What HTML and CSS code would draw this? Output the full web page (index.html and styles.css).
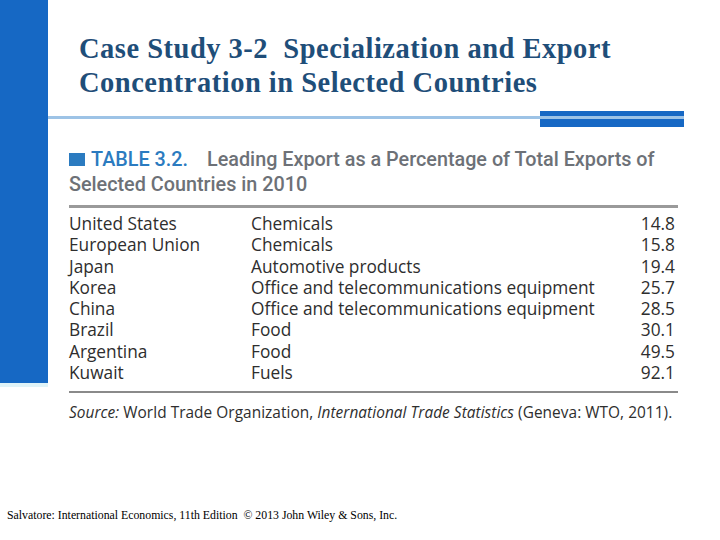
FILE: index.html
```html
<!DOCTYPE html>
<html>
<head>
<meta charset="utf-8">
<link rel="stylesheet" href="styles.css">
</head>
<body>
<div class="slide">
  <div class="sidebar"></div>
  <div class="content">
    <h1 class="title">Case Study 3-2&nbsp; Specialization and Export<br>Concentration in Selected Countries</h1>
    <div class="divider">
      <div class="divider-line"></div>
      <div class="divider-block"><div class="divider-stripe"></div></div>
    </div>
    <div class="table-box">
      <div class="table-head"><span class="square"></span><span class="label">TABLE 3.2.</span><span class="caption">Leading Export as a Percentage of Total Exports of Selected Countries in 2010</span></div>
      <div class="rule"></div>
      <div class="rows">
        <div class="row"><span class="c1">United States</span><span class="c2">Chemicals</span><span class="c3">14.8</span></div>
        <div class="row"><span class="c1">European Union</span><span class="c2">Chemicals</span><span class="c3">15.8</span></div>
        <div class="row"><span class="c1">Japan</span><span class="c2">Automotive products</span><span class="c3">19.4</span></div>
        <div class="row"><span class="c1">Korea</span><span class="c2">Office and telecommunications equipment</span><span class="c3">25.7</span></div>
        <div class="row"><span class="c1">China</span><span class="c2">Office and telecommunications equipment</span><span class="c3">28.5</span></div>
        <div class="row"><span class="c1">Brazil</span><span class="c2">Food</span><span class="c3">30.1</span></div>
        <div class="row"><span class="c1">Argentina</span><span class="c2">Food</span><span class="c3">49.5</span></div>
        <div class="row"><span class="c1">Kuwait</span><span class="c2">Fuels</span><span class="c3">92.1</span></div>
      </div>
      <div class="rule rule-bottom"></div>
      <div class="source"><i>Source:</i> World Trade Organization, <i>International Trade Statistics</i> (Geneva: WTO, 2011).</div>
    </div>
  </div>
</div>
<div class="footer">Salvatore: International Economics, 11th Edition&nbsp; © 2013 John Wiley &amp; Sons, Inc.</div>
</body>
</html>
```

FILE: styles.css
```css
html, body {
  margin: 0;
  padding: 0;
  background: #ffffff;
}
body {
  width: 720px;
  height: 540px;
  overflow: hidden;
  display: flex;
  flex-direction: column;
}
.slide {
  display: grid;
  grid-template-columns: 48px 1fr;
  align-items: start;
}
.sidebar {
  height: 383px;
  background: #1668c4;
  border-bottom: 4px solid #dff3f8;
}
.content {
  display: flex;
  flex-direction: column;
}
.title {
  margin: 32px 0 0 31px;
  font-family: "Liberation Serif", "Times New Roman", serif;
  font-weight: bold;
  font-size: 28.5px;
  line-height: 34px;
  letter-spacing: 0.5px;
  color: #1f4e79;
}
.divider {
  margin-top: 11px;
  margin-right: 36px;
  display: flex;
  align-items: flex-start;
}
.divider-line {
  flex: 1;
  height: 3px;
  margin-top: 5px;
  background: #9dc3e6;
}
.divider-block {
  width: 144px;
  height: 16px;
  background: #1668c4;
  padding-top: 5px;
  box-sizing: border-box;
}
.divider-stripe {
  height: 3px;
  background: #9dc3e6;
}
.table-box {
  margin: 20px 0 0 21px;
  width: 609px;
}
.table-head {
  font-family: Roboto, "Liberation Sans", sans-serif;
  font-weight: 500;
  font-size: 19.8px;
  line-height: 25px;
  color: #6d7177;
}
.square {
  display: inline-block;
  width: 16px;
  height: 13px;
  background: #2b7bc0;
  margin-right: 6px;
}
.label {
  color: #2b7bc0;
  margin-right: 19px;
}
.rule {
  height: 3px;
  background: #9a9a9a;
  margin-top: 8px;
}
.rows {
  margin-top: 5px;
  font-family: "Open Sans", "Liberation Sans", sans-serif;
  font-size: 17.3px;
  color: #2e2e2e;
}
.row {
  display: flex;
  height: 21.3px;
  line-height: 21.3px;
}
.c1 {
  width: 182px;
}
.c2 {
  flex: 1;
}
.c3 {
  padding-right: 3px;
}
.rule-bottom {
  margin-top: 8px;
  height: 2px;
  background: #8a8a8a;
}
.source {
  margin-top: 9px;
  font-family: "Open Sans", "Liberation Sans", sans-serif;
  font-size: 15.4px;
  letter-spacing: 0.05px;
  color: #2e2e2e;
}
.footer {
  margin-top: auto;
  padding: 0 0 17px 7px;
  line-height: 16px;
  font-family: "Liberation Serif", "Times New Roman", serif;
  font-size: 11.8px;
  color: #000;
}
```
